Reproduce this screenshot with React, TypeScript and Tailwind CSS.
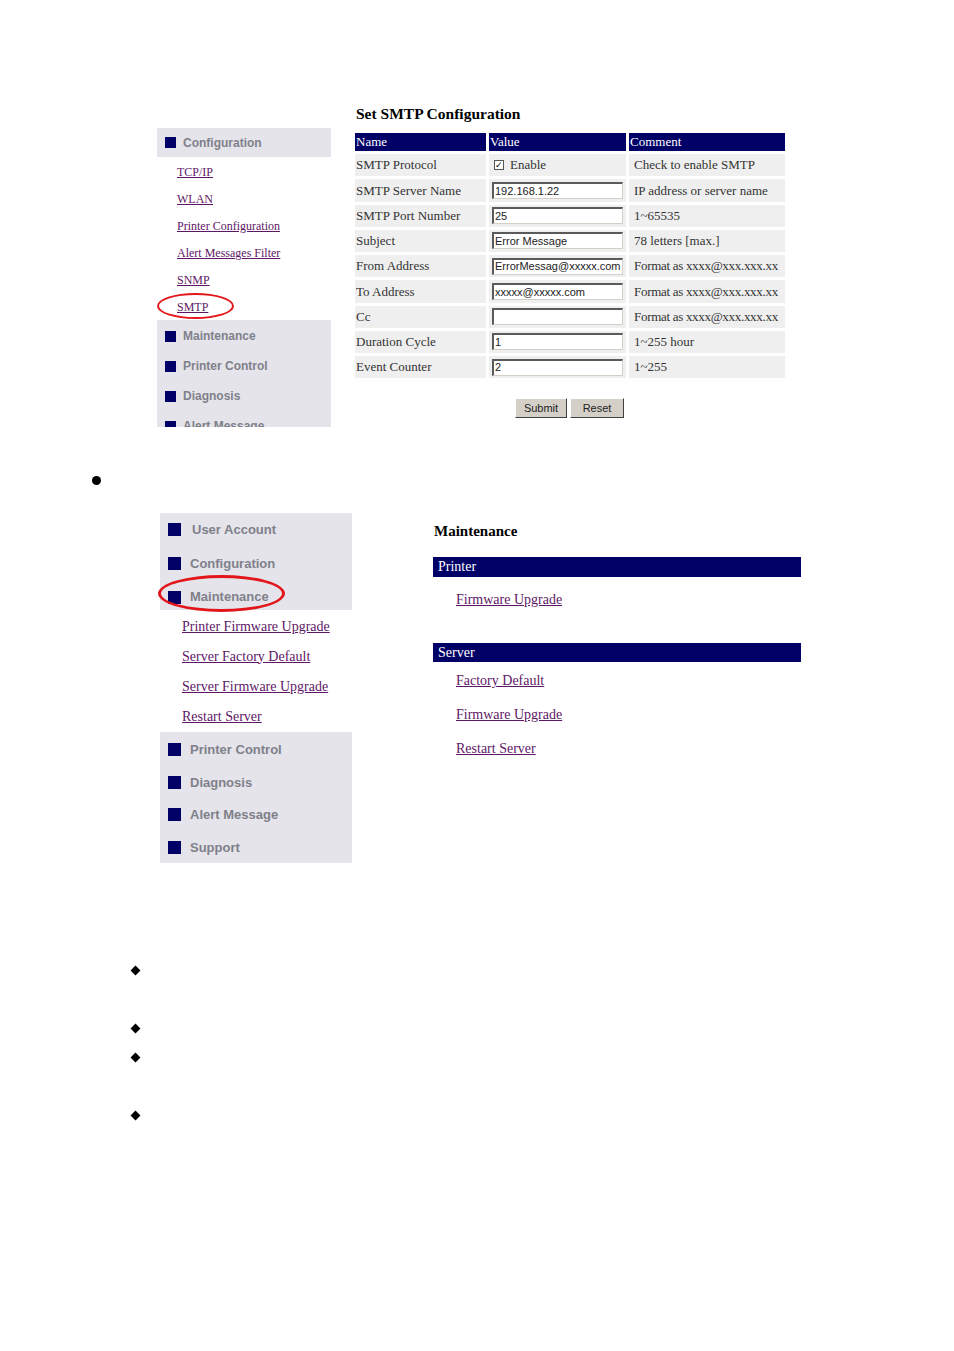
const serif = { fontFamily: '"Liberation Serif", "Times New Roman", serif' }
const sans = { fontFamily: '"Liberation Sans", Arial, sans-serif' }

const configLinks = ['TCP/IP', 'WLAN', 'Printer Configuration', 'Alert Messages Filter', 'SNMP', 'SMTP']
const topMenu = ['Maintenance', 'Printer Control', 'Diagnosis', 'Alert Message']

interface Row {
  name: string
  value: string | null
  comment: string
}

const rows: Row[] = [
  { name: 'SMTP Protocol', value: null, comment: 'Check to enable SMTP' },
  { name: 'SMTP Server Name', value: '192.168.1.22', comment: 'IP address or server name' },
  { name: 'SMTP Port Number', value: '25', comment: '1~65535' },
  { name: 'Subject', value: 'Error Message', comment: '78 letters [max.]' },
  { name: 'From Address', value: 'ErrorMessag@xxxxx.com', comment: 'Format as xxxx@xxx.xxx.xx' },
  { name: 'To Address', value: 'xxxxx@xxxxx.com', comment: 'Format as xxxx@xxx.xxx.xx' },
  { name: 'Cc', value: '', comment: 'Format as xxxx@xxx.xxx.xx' },
  { name: 'Duration Cycle', value: '1', comment: '1~255 hour' },
  { name: 'Event Counter', value: '2', comment: '1~255' },
]

function Square({ size }: { size: 'sm' | 'md' }) {
  return <span className={`${size === 'sm' ? 'w-[11px] h-[11px]' : 'w-[13px] h-[13px]'} bg-[#000066] shrink-0`} />
}

function TopSidebar() {
  return (
    <div className="relative mt-[128px] w-[174px] h-[299px] overflow-hidden" style={sans}>
      <div className="h-[29px] bg-[#e4e4ea] flex items-center pl-[8px] gap-[7px]">
        <Square size="sm" />
        <span className="text-[12px] font-bold text-[#80808a]">Configuration</span>
      </div>
      <div className="pt-[1px] bg-white">
        {configLinks.map((l) => (
          <div key={l} className="h-[27px] flex items-center pl-[20px]">
            <a className="text-[12px] text-[#5e1766] underline" style={serif}>
              {l}
            </a>
          </div>
        ))}
      </div>
      <div className="bg-[#e4e4ea] pt-[1px] h-[200px]">
        {topMenu.map((m) => (
          <div key={m} className="h-[30px] flex items-center pl-[8px] gap-[7px]">
            <Square size="sm" />
            <span className="text-[12px] font-bold text-[#80808a]">{m}</span>
          </div>
        ))}
      </div>
      <div className="absolute left-0 top-[165px] w-[77px] h-[26px] rounded-[50%] border-[2.5px] border-[#e3161b]" />
    </div>
  )
}

function Field({ value }: { value: string }) {
  return (
    <div
      className="w-[131px] h-[17px] bg-white border-t-2 border-l-2 border-t-[#5a5a5a] border-l-[#5a5a5a] border-b border-r border-b-[#d4d0c8] border-r-[#d4d0c8] flex items-center pl-[1px] text-[11px] text-[#222] overflow-hidden whitespace-nowrap"
      style={sans}
    >
      {value}
    </div>
  )
}

function SmtpTable() {
  return (
    <div className="ml-[24px] pt-[104px]" style={serif}>
      <div className="h-[20px] leading-[20px] text-[15.5px] font-bold text-black pl-[1px]">Set SMTP Configuration</div>
      <div className="mt-[9px] grid grid-cols-[131px_137px_156px] gap-x-[3px] gap-y-[3px] auto-rows-[22.25px] grid-rows-[18px]">
        {['Name', 'Value', 'Comment'].map((h) => (
          <div key={h} className="bg-[#000066] text-white text-[13px] leading-[18px] pl-[1px]">
            {h}
          </div>
        ))}
        {rows.map((r) => (
          <div key={r.name} className="contents">
            <div className="bg-[#efefef] flex items-center pl-[1px] text-[13px] text-[#333]">{r.name}</div>
            <div className="bg-[#efefef] flex items-center pl-[3px]">
              {r.value === null ? (
                <div className="flex items-center gap-[6px] pl-[2px]">
                  <span className="w-[10px] h-[10px] bg-white border border-[#555] flex items-center justify-center text-[9px] leading-none text-black">
                    ✓
                  </span>
                  <span className="text-[13px] text-[#333]">Enable</span>
                </div>
              ) : (
                <Field value={r.value} />
              )}
            </div>
            <div
              className={`bg-[#efefef] flex items-center pl-[5px] text-[13px] text-[#333] whitespace-nowrap overflow-hidden ${
                r.comment.startsWith('Format') ? 'tracking-[-0.3px]' : ''
              }`}
            >
              {r.comment}
            </div>
          </div>
        ))}
      </div>
      <div className="mt-[20px] flex justify-center gap-[3px] pr-[1px]" style={sans}>
        <button className="w-[52px] h-[20px] bg-[#d4d0c8] text-[11px] text-[#222] border border-t-white border-l-white border-b-[#404040] border-r-[#404040]">
          Submit
        </button>
        <button className="w-[54px] h-[20px] bg-[#d4d0c8] text-[11px] text-[#222] border border-t-white border-l-white border-b-[#404040] border-r-[#404040]">
          Reset
        </button>
      </div>
    </div>
  )
}

const mainLinks = ['Printer Firmware Upgrade', 'Server Factory Default', 'Server Firmware Upgrade', 'Restart Server']
const lowerMenu = ['Printer Control', 'Diagnosis', 'Alert Message', 'Support']

function BottomSidebar() {
  return (
    <div className="relative w-[192px]" style={sans}>
      <div className="bg-[#e4e4ea] h-[97px]">
        <div className="h-[33px] flex items-center pl-[8px] gap-[11px]">
          <Square size="md" />
          <span className="text-[13px] font-bold text-[#80808a]">User Account</span>
        </div>
        <div className="h-[35px] flex items-center pl-[8px] gap-[9px]">
          <Square size="md" />
          <span className="text-[13px] font-bold text-[#80808a]">Configuration</span>
        </div>
        <div className="h-[29px] flex items-center pl-[8px] pt-[3px] gap-[9px]">
          <Square size="md" />
          <span className="text-[13px] font-bold text-[#80808a]">Maintenance</span>
        </div>
      </div>
      <div className="bg-white pt-[1px] h-[122px]">
        {mainLinks.map((l) => (
          <div key={l} className="h-[30px] flex items-center pl-[22px]">
            <a className="text-[14px] text-[#5e1766] underline" style={serif}>
              {l}
            </a>
          </div>
        ))}
      </div>
      <div className="bg-[#e4e4ea] pt-[1.5px] h-[131px]">
        {lowerMenu.map((m) => (
          <div key={m} className="h-[32.5px] flex items-center pl-[8px] gap-[9px]">
            <Square size="md" />
            <span className="text-[13px] font-bold text-[#80808a]">{m}</span>
          </div>
        ))}
      </div>
      <div className="absolute left-[-2px] top-[62px] w-[127px] h-[37px] rounded-[50%] border-[3px] border-[#e3161b]" />
    </div>
  )
}

function MaintenancePanel() {
  const link = 'text-[14px] text-[#5e1766] underline h-[20px] leading-[20px]'
  return (
    <div className="ml-[81px] w-[368px] pt-[8px]" style={serif}>
      <div className="h-[20px] leading-[20px] text-[15px] font-bold text-black pl-[1px]">Maintenance</div>
      <div className="mt-[16px] h-[20px] bg-[#000066] text-white text-[14px] leading-[20px] pl-[5px]">Printer</div>
      <div className="mt-[13px] pl-[23px]">
        <a className={`${link} block w-fit`}>Firmware Upgrade</a>
      </div>
      <div className="mt-[33px] h-[19px] bg-[#000066] text-white text-[14px] leading-[19px] pl-[5px]">Server</div>
      <div className="mt-[9px] pl-[23px] flex flex-col gap-[14px]">
        <a className={link}>Factory Default</a>
        <a className={link}>Firmware Upgrade</a>
        <a className={link}>Restart Server</a>
      </div>
    </div>
  )
}

function Diamond() {
  return <div className="w-[7px] h-[7px] rotate-45 bg-black" />
}

export default function App() {
  return (
    <div className="w-[954px] min-h-[1351px] bg-white">
      <div className="flex items-start pl-[157px]">
        <TopSidebar />
        <SmtpTable />
      </div>
      <div className="ml-[92px] mt-[49px] w-[9px] h-[9px] rounded-full bg-black" />
      <div className="flex items-start pl-[160px] mt-[28px]">
        <BottomSidebar />
        <MaintenancePanel />
      </div>
      <div className="pl-[132px] flex flex-col">
        <div className="mt-[104px]">
          <Diamond />
        </div>
        <div className="mt-[51px]">
          <Diamond />
        </div>
        <div className="mt-[22px]">
          <Diamond />
        </div>
        <div className="mt-[51px]">
          <Diamond />
        </div>
      </div>
    </div>
  )
}
